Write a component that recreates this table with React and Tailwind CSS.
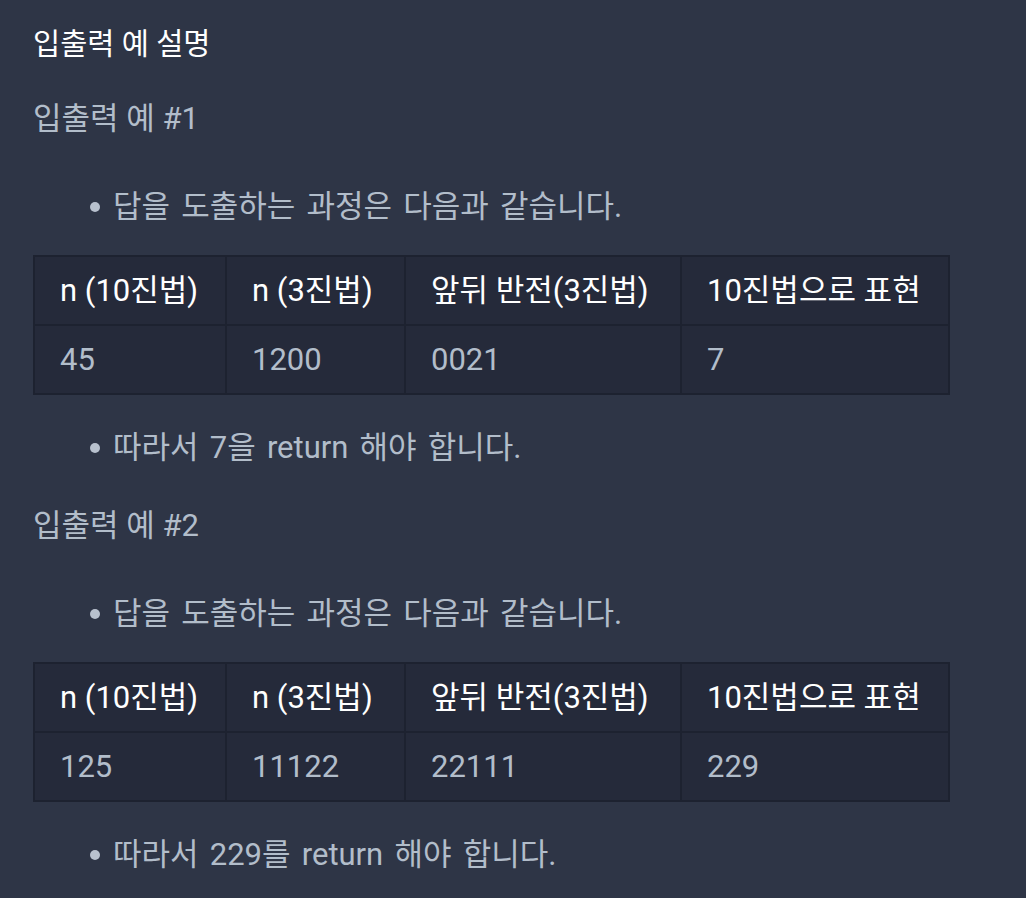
import React from 'react';

const font = "font-['Roboto','Noto_Sans_CJK_KR',sans-serif]";

const examples = [
  {
    title: '입출력 예 #1',
    row: ['45', '1200', '0021', '7'],
    result: '따라서 7을 return 해야 합니다.',
  },
  {
    title: '입출력 예 #2',
    row: ['125', '11122', '22111', '229'],
    result: '따라서 229를 return 해야 합니다.',
  },
];

const headers = ['n (10진법)', 'n (3진법)', '앞뒤 반전(3진법)', '10진법으로 표현'];
const widths = ['w-[192px]', 'w-[179px]', 'w-[276px]', 'w-[268px]'];

const Bullet = ({ children, className = '' }) => (
  <ul className={`pl-[57px] ${className}`}>
    <li className="flex items-center h-10">
      <span className="w-[10px] h-[10px] rounded-full bg-[#b8c1ce] mr-[13px]"></span>
      <span className="[word-spacing:3.5px]">{children}</span>
    </li>
  </ul>
);

const ExampleTable = ({ row }) => (
  <table className="mt-[28px] w-[915px] border-collapse bg-[#252a3a] table-fixed">
    <thead>
      <tr className="h-[69px]">
        {headers.map((h, i) => (
          <th key={h} className={`${widths[i]} border-2 border-[#1d2230] px-[25px] text-left font-normal text-white`}>
            {h}
          </th>
        ))}
      </tr>
    </thead>
    <tbody>
      <tr className="h-[69px]">
        {row.map((v, i) => (
          <td key={i} className="border-2 border-[#1d2230] px-[25px] text-[#b2bdca]">
            {v}
          </td>
        ))}
      </tr>
    </tbody>
  </table>
);

export default function App() {
  return (
    <div className={`min-h-screen bg-[#2e3546] pl-[33px] pt-[24px] text-[31px] leading-10 text-[#b2bdca] ${font}`}>
      <h5 className="text-white text-[29.5px]">입출력 예 설명</h5>

      {examples.map((ex, idx) => (
        <div key={ex.title} className={idx === 0 ? 'mt-[35px]' : 'mt-[38px]'}>
          <p>{ex.title}</p>
          <Bullet className="mt-[48px]">답을 도출하는 과정은 다음과 같습니다.</Bullet>
          <ExampleTable row={ex.row} />
          <Bullet className="mt-[33px]">{ex.result}</Bullet>
        </div>
      ))}
    </div>
  );
}
